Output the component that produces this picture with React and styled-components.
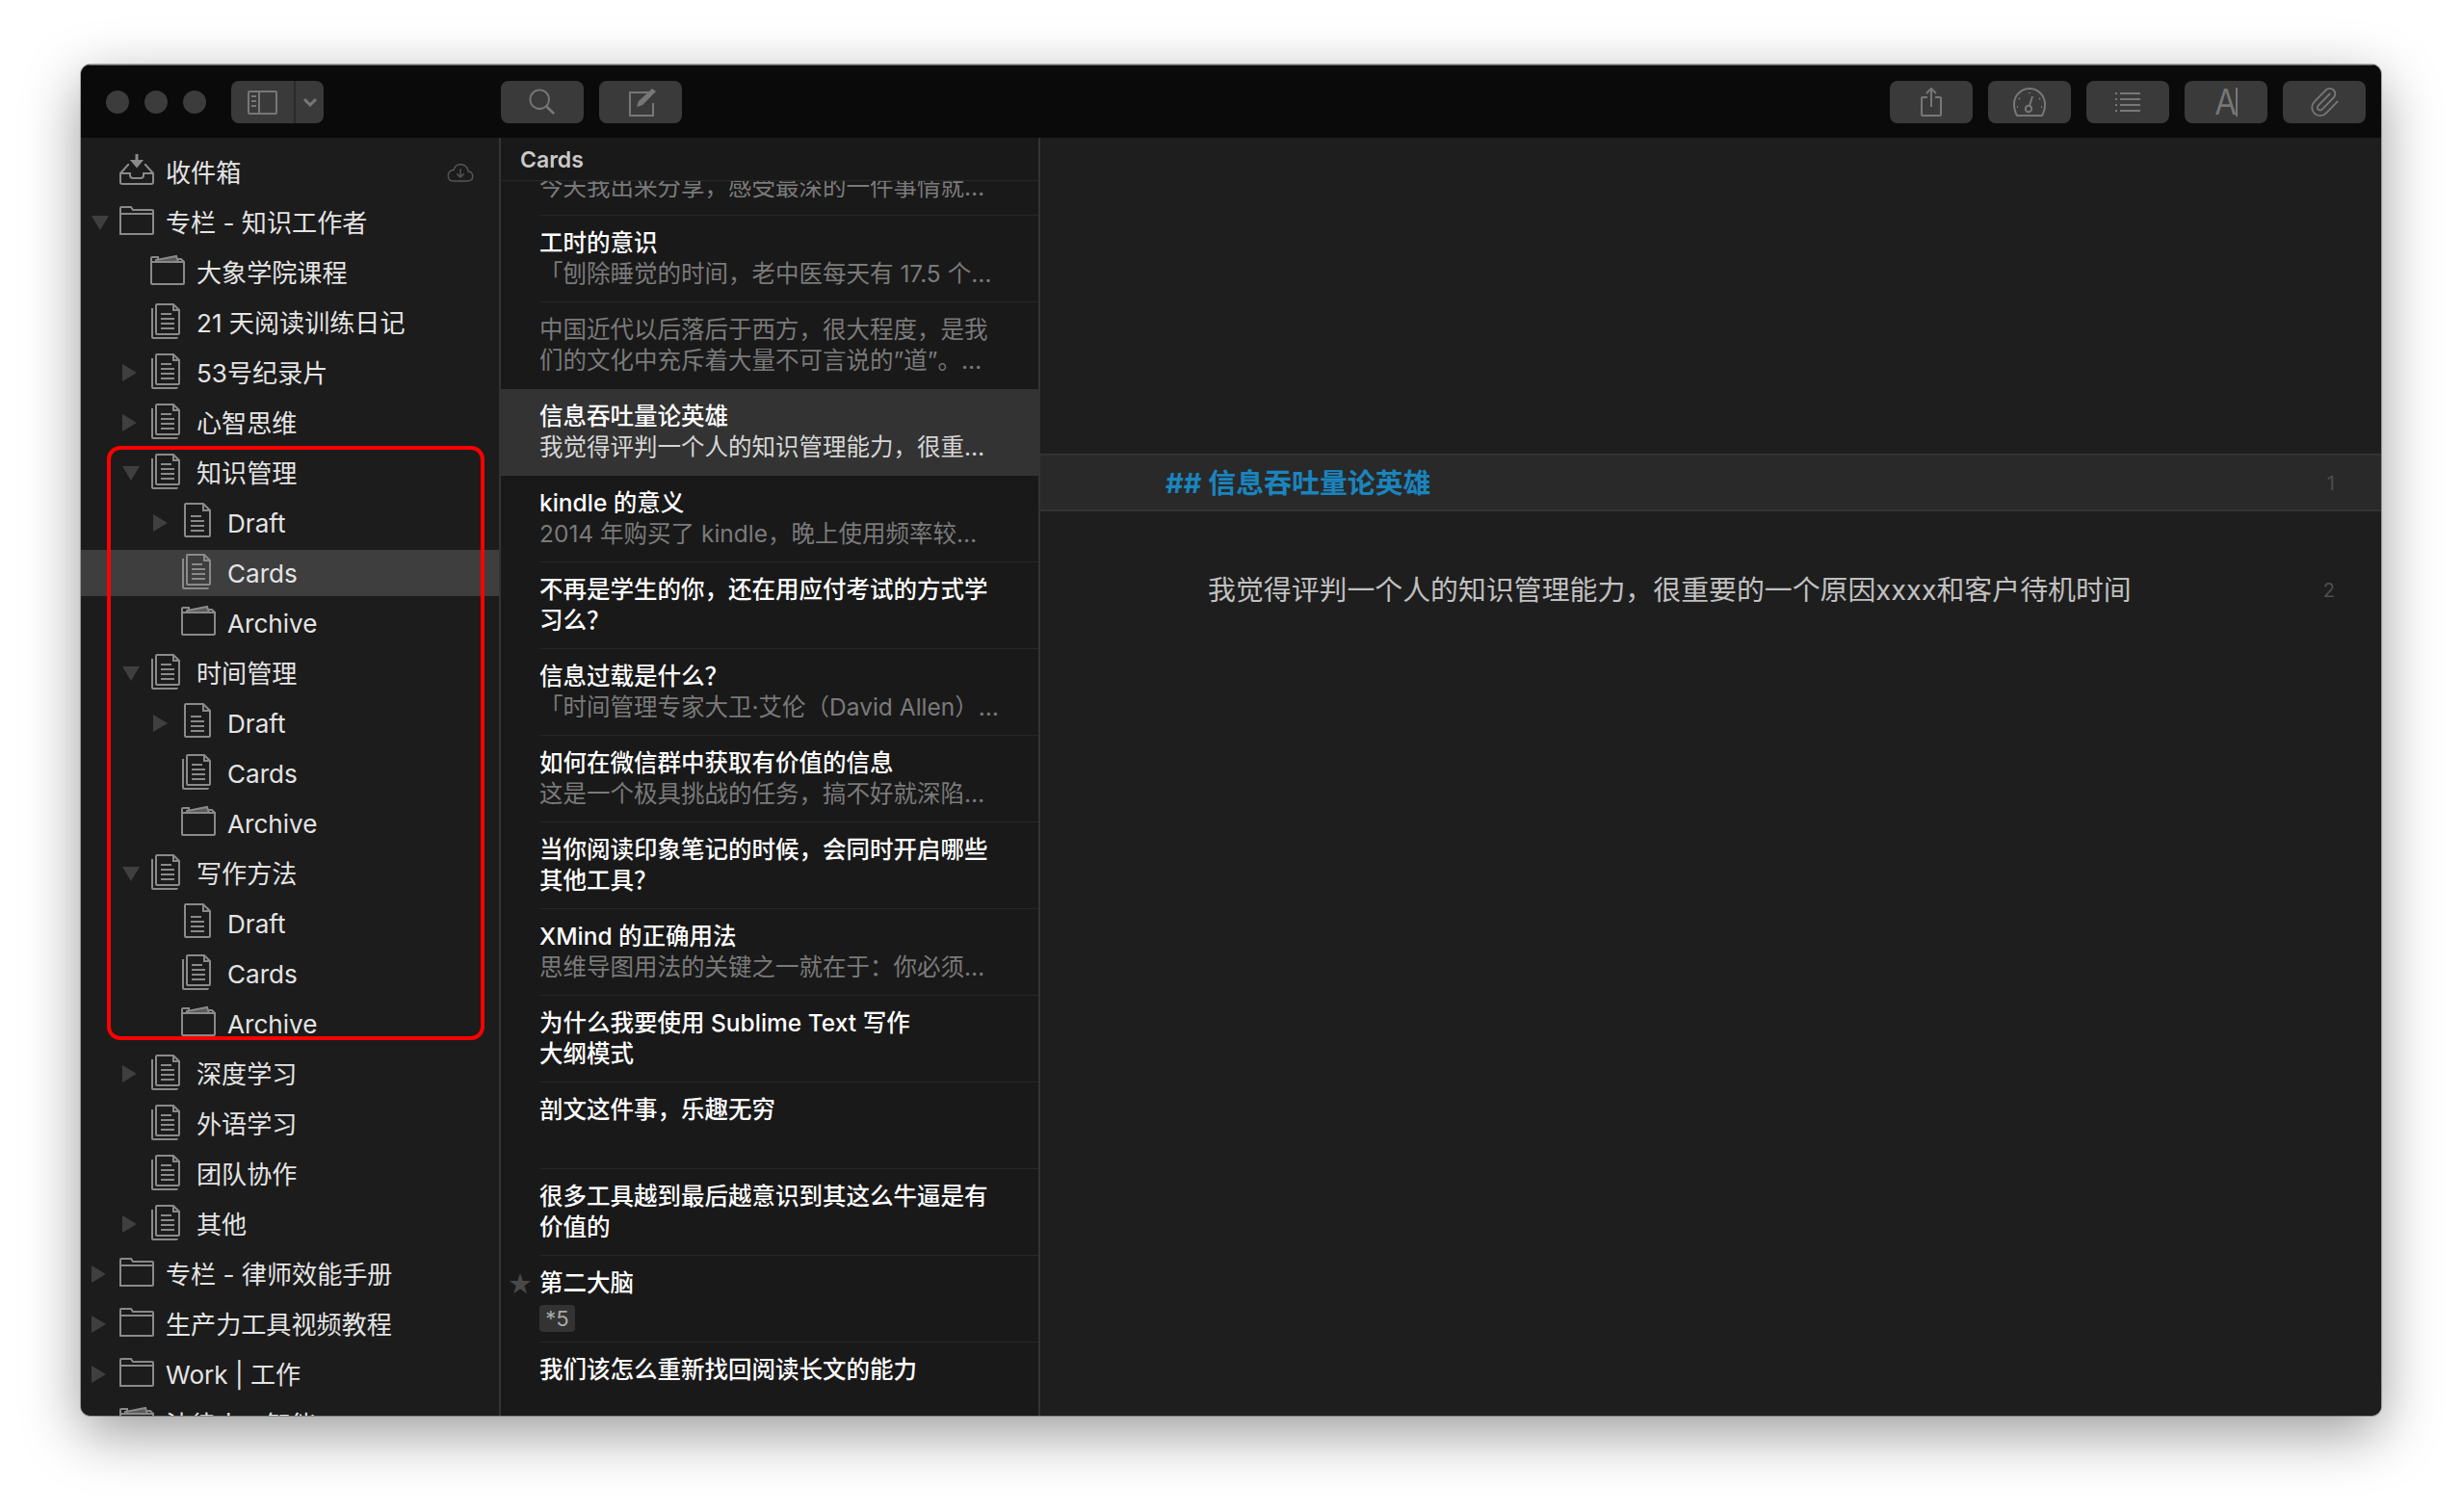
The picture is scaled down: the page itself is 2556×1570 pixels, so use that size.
import styled, { createGlobalStyle } from "styled-components";
import { Paperclip } from "lucide-react";

const sansStack = `Inter, "Noto Sans CJK SC", sans-serif`;

const GlobalStyle = createGlobalStyle`
  html {
    overflow: hidden;
    background: #fff;
  }
  body {
    margin: 0;
    padding: 0;
    height: 1570px;
    background: #fff;
    font-family: ${sansStack};
  }
`;

const sideItems = [
  { level: 0, icon: "inbox", label: "收件箱", cloud: true },
  { level: 0, icon: "folder", arrow: "down", label: "专栏 - 知识工作者" },
  { level: 1, icon: "archive", label: "大象学院课程" },
  { level: 1, icon: "stack", label: "21 天阅读训练日记" },
  { level: 1, icon: "stack", arrow: "right", label: "53号纪录片" },
  { level: 1, icon: "stack", arrow: "right", label: "心智思维" },
  { level: 1, icon: "stack", arrow: "down", label: "知识管理" },
  { level: 2, icon: "doc", arrow: "right", label: "Draft" },
  { level: 2, icon: "stack", label: "Cards", selected: true },
  { level: 2, icon: "archive", label: "Archive" },
  { level: 1, icon: "stack", arrow: "down", label: "时间管理" },
  { level: 2, icon: "doc", arrow: "right", label: "Draft" },
  { level: 2, icon: "stack", label: "Cards" },
  { level: 2, icon: "archive", label: "Archive" },
  { level: 1, icon: "stack", arrow: "down", label: "写作方法" },
  { level: 2, icon: "doc", label: "Draft" },
  { level: 2, icon: "stack", label: "Cards" },
  { level: 2, icon: "archive", label: "Archive" },
  { level: 1, icon: "stack", arrow: "right", label: "深度学习" },
  { level: 1, icon: "stack", label: "外语学习" },
  { level: 1, icon: "stack", label: "团队协作" },
  { level: 1, icon: "stack", arrow: "right", label: "其他" },
  { level: 0, icon: "folder", arrow: "right", label: "专栏 - 律师效能手册" },
  { level: 0, icon: "folder", arrow: "right", label: "生产力工具视频教程" },
  { level: 0, icon: "folder", arrow: "right", label: "Work | 工作" },
  { level: 0, icon: "archive", label: "法律人工智能" },
];

const notes = [
  { title: ["\u00a0"], sub: ["今天我出来分享，感受最深的一件事情就…"] },
  { title: ["工时的意识"], sub: ["「刨除睡觉的时间，老中医每天有 17.5 个…"] },
  { sub: ["中国近代以后落后于西方，很大程度，是我", "们的文化中充斥着大量不可言说的”道”。…"], noLine: true },
  { title: ["信息吞吐量论英雄"], sub: ["我觉得评判一个人的知识管理能力，很重…"], selected: true },
  { title: ["kindle 的意义"], sub: ["2014 年购买了 kindle，晚上使用频率较…"] },
  { title: ["不再是学生的你，还在用应付考试的方式学", "习么？"] },
  { title: ["信息过载是什么？"], sub: ["「时间管理专家大卫·艾伦（David Allen）…"] },
  { title: ["如何在微信群中获取有价值的信息"], sub: ["这是一个极具挑战的任务，搞不好就深陷…"] },
  { title: ["当你阅读印象笔记的时候，会同时开启哪些", "其他工具？"] },
  { title: ["XMind 的正确用法"], sub: ["思维导图用法的关键之一就在于：你必须…"] },
  { title: ["为什么我要使用 Sublime Text 写作", "大纲模式"] },
  { title: ["剖文这件事，乐趣无穷"] },
  { title: ["很多工具越到最后越意识到其这么牛逼是有", "价值的"] },
  { title: ["第二大脑"], tag: "*5", star: true },
  { title: ["我们该怎么重新找回阅读长文的能力"] },
];

const InboxIcon = () => (
  <IconSvg viewBox="0 0 40 40">
    <path d="M12 14 H11 L3 23 V32 Q3 34 5 34 H35 Q37 34 37 32 V23 L29 14 H28" />
    <path d="M3 23 H13 V25 Q13 28 16 28 H24 Q27 28 27 25 V23 H37" />
    <path d="M20 3 V11" strokeWidth="3" />
    <path d="M15 10 H25 L20 16 Z" fill="#8a8a8a" />
  </IconSvg>
);

const FolderIcon = () => (
  <IconSvg viewBox="0 0 40 40">
    <path d="M3 34 V7 Q3 6 4 6 H14 L16 9 H36 Q37 9 37 10 V33 Q37 34 36 34 Z" />
    <path d="M3 13 H37" />
  </IconSvg>
);

const ArchiveIcon = () => (
  <IconSvg viewBox="0 0 40 40">
    <path d="M3 11 V33 Q3 34 4 34 H36 Q37 34 37 33 V11 Z" />
    <path d="M3 11 V7 Q3 6 4 6 H10 V9 M31 8 H34 L37 11" />
    <path d="M8 11 V9 L29 5 L31 11 Z" fill="#5a5a5a" />
  </IconSvg>
);

const DocLines = ({ x, y }) => (
  <path d={`M${x} ${y} H${x + 11} M${x} ${y + 5} H${x + 14} M${x} ${y + 10} H${x + 14} M${x} ${y + 15} H${x + 14}`} />
);

const DocIcon = () => (
  <IconSvg viewBox="0 0 40 40">
    <path d="M6 35 V3 Q6 2 7 2 H25 L32 9 V35 Q32 36 31 36 H7 Q6 36 6 35 Z" />
    <path d="M25 2 V9 H32" />
    <DocLines x={12} y={15} />
  </IconSvg>
);

const StackIcon = () => (
  <IconSvg viewBox="0 0 40 40">
    <path d="M8 33 V4 Q8 3 9 3 H26 L32 9 V33 Q32 34 31 34 H9 Q8 34 8 33 Z" />
    <path d="M26 3 V9 H32" />
    <path d="M4 7 V37 Q4 38 5 38 H29 Q30 38 30 37" />
    <DocLines x={13} y={13} />
  </IconSvg>
);

const sideIcons = {
  inbox: InboxIcon,
  folder: FolderIcon,
  archive: ArchiveIcon,
  doc: DocIcon,
  stack: StackIcon,
};

const CloudIcon = () => (
  <CloudSvg viewBox="0 0 30 22">
    <path d="M8 21 H23 Q29 21 29 15.5 Q29 10.5 24 10 Q23 3 16 2 Q9 1.5 7.5 8 Q1 9 1 15 Q1 21 8 21 Z" />
    <path d="M15 7 V16 M11 12.5 L15 16.5 L19 12.5" />
  </CloudSvg>
);

const SidebarToggleIcon = () => (
  <ToolSvg viewBox="0 0 32 26" width="32" height="26">
    <rect x="1" y="2" width="29" height="23" rx="1" />
    <path d="M12 2 V25" />
    <path d="M4 7 H9 M4 12 H9 M4 17 H9" strokeWidth="2" />
  </ToolSvg>
);

const ChevronIcon = () => (
  <ToolSvg viewBox="0 0 16 10" width="16" height="10">
    <path d="M2 2 L8 8 L14 2" strokeWidth="3" />
  </ToolSvg>
);

const SearchIcon = () => (
  <ToolSvg viewBox="0 0 30 30" width="28" height="28">
    <circle cx="12" cy="12" r="10.5" />
    <path d="M20 20 L28 28" strokeWidth="3" />
  </ToolSvg>
);

const ComposeIcon = () => (
  <ComposeSvg viewBox="0 0 30 30" width="30" height="30">
    <path d="M20 5 H1 V29 H25 V16" />
    <path d="M8 20 L10 14 L24 1 L28 4 L14 18 Z" fill="#777" stroke="none" />
  </ComposeSvg>
);

const ShareIcon = () => (
  <ToolSvg viewBox="0 0 24 32" width="24" height="32">
    <path d="M8 11 H3 Q2 11 2 12 V29 Q2 30 3 30 H21 Q22 30 22 29 V12 Q22 11 21 11 H16" />
    <path d="M12 2 V21 M7 7 L12 2 L17 7" />
  </ToolSvg>
);

const GaugeIcon = () => (
  <ToolSvg viewBox="0 0 36 32" width="36" height="32">
    <path d="M5 30 Q2 25 2 18 A16 16 0 0 1 34 18 Q34 25 31 30 Z" />
    <circle cx="17" cy="23" r="3.2" />
    <path d="M18 20 L21 10" />
    <path d="M18 6 V7 M7 12 L8 13 M29 12 L28 13 M5 21 H6 M30 21 H31" />
  </ToolSvg>
);

const ListIcon = () => (
  <ToolSvg viewBox="0 0 28 22" width="28" height="22">
    <path d="M6 2 H27 M6 8 H27 M6 14 H27 M6 20 H27" strokeWidth="2" />
    <path d="M1 2 H3 M1 8 H3 M1 14 H3 M1 20 H3" strokeWidth="2" />
  </ToolSvg>
);

const FontIcon = () => (
  <FontGlyph>
    <FontLetter>A</FontLetter>
    <FontCaret />
  </FontGlyph>
);

const TreeRow = ({ item }) => {
  const Icon = sideIcons[item.icon];
  return (
    <Row $level={item.level} $selected={item.selected}>
      <ArrowSlot>{item.arrow && <Arrow $dir={item.arrow} />}</ArrowSlot>
      <IconSlot>
        <Icon />
      </IconSlot>
      <RowLabel>{item.label}</RowLabel>
      {item.cloud && <CloudIcon />}
    </Row>
  );
};

const NoteRow = ({ note }) => (
  <Note $selected={note.selected}>
    <Gutter>{note.star && <Star>★</Star>}</Gutter>
    <NoteBody $noLine={note.noLine || note.selected}>
      {note.title &&
        note.title.map((line) => <NoteTitle key={line}>{line}</NoteTitle>)}
      {note.sub &&
        note.sub.map((line) => (
          <NoteSub key={line} $selected={note.selected}>
            {line}
          </NoteSub>
        ))}
      {note.tag && <Tag>{note.tag}</Tag>}
    </NoteBody>
  </Note>
);

export default function App() {
  return (
    <Window>
      <GlobalStyle />
      <TitleBar>
        <Lights>
          <Light />
          <Light />
          <Light />
        </Lights>
        <SplitButton>
          <SplitMain>
            <SidebarToggleIcon />
          </SplitMain>
          <SplitArrow>
            <ChevronIcon />
          </SplitArrow>
        </SplitButton>
        <CenterTools>
          <ToolButton>
            <SearchIcon />
          </ToolButton>
          <ToolButton>
            <ComposeIcon />
          </ToolButton>
        </CenterTools>
        <RightTools>
          <ToolButton>
            <ShareIcon />
          </ToolButton>
          <ToolButton>
            <GaugeIcon />
          </ToolButton>
          <ToolButton>
            <ListIcon />
          </ToolButton>
          <ToolButton>
            <FontIcon />
          </ToolButton>
          <ToolButton>
            <Paperclip size={34} color="#777" strokeWidth={1.3} />
          </ToolButton>
        </RightTools>
      </TitleBar>
      <Columns>
        <Sidebar>
          {sideItems.map((item, i) => (
            <TreeRow key={i} item={item} />
          ))}
          <RedOutline />
        </Sidebar>
        <NoteList>
          <ListHeader>Cards</ListHeader>
          <ListBody>
            {notes.map((note, i) => (
              <NoteRow key={i} note={note} />
            ))}
          </ListBody>
        </NoteList>
        <Editor>
          <HeadingLine>
            <HeadingText>## 信息吞吐量论英雄</HeadingText>
            <LineNumber>1</LineNumber>
          </HeadingLine>
          <BodyLine>
            <BodyText>
              我觉得评判一个人的知识管理能力，很重要的一个原因xxxx和客户待机时间
            </BodyText>
            <LineNumber>2</LineNumber>
          </BodyLine>
        </Editor>
      </Columns>
    </Window>
  );
}

const Window = styled.div`
  box-sizing: border-box;
  width: 2388px;
  height: 1403px;
  position: relative;
  top: 67px;
  left: 84px;
  display: flex;
  flex-direction: column;
  overflow: hidden;
  border-radius: 10px;
  background: #1c1c1c;
  box-shadow: 0 18px 60px rgba(0, 0, 0, 0.4), 0 0 0 1px rgba(0, 0, 0, 0.28);
`;

const TitleBar = styled.div`
  box-sizing: border-box;
  height: 76px;
  flex-shrink: 0;
  display: flex;
  align-items: center;
  padding: 1px 16px 0 26px;
  background: #0a0a0a;
  border-top: 1px solid #6a6a6a;
`;

const Lights = styled.div`
  display: flex;
  gap: 16px;
`;

const Light = styled.div`
  width: 24px;
  height: 24px;
  border-radius: 50%;
  background: #3c3c3c;
`;

const SplitButton = styled.div`
  margin-left: 26px;
  height: 44px;
  width: 96px;
  display: flex;
  border-radius: 8px;
  overflow: hidden;
  background: #3a3a3a;
`;

const SplitMain = styled.div`
  width: 65px;
  display: flex;
  align-items: center;
  justify-content: center;
  border-right: 2px solid #2a2a2a;
`;

const SplitArrow = styled.div`
  flex: 1;
  display: flex;
  align-items: center;
  justify-content: center;
`;

const CenterTools = styled.div`
  margin-left: 184px;
  display: flex;
  gap: 16px;
`;

const RightTools = styled.div`
  margin-left: auto;
  display: flex;
  gap: 16px;
`;

const ToolButton = styled.div`
  width: 86px;
  height: 44px;
  border-radius: 8px;
  background: #3a3a3a;
  display: flex;
  align-items: center;
  justify-content: center;
`;

const ToolSvg = styled.svg`
  display: block;
  fill: none;
  stroke: #777;
  stroke-width: 2;
`;

const ComposeSvg = styled(ToolSvg)`
  margin-left: 5px;
`;

const FontGlyph = styled.div`
  display: flex;
  align-items: center;
  font-family: "Liberation Sans", sans-serif;
  font-size: 38px;
  line-height: 44px;
  color: #777;
`;

const FontLetter = styled.span`
  display: block;
  width: 21px;
  transform: scaleX(0.84);
  transform-origin: left center;
`;

const FontCaret = styled.span`
  width: 2px;
  height: 30px;
  background: #777;
`;

const Columns = styled.div`
  flex: 1;
  min-height: 0;
  display: flex;
`;

const Sidebar = styled.div`
  box-sizing: border-box;
  position: relative;
  width: 436px;
  flex-shrink: 0;
  padding-top: 12px;
  overflow: hidden;
  background: #1c1c1c;
  border-right: 2px solid #333;
`;

const Row = styled.div`
  height: 48px;
  margin-bottom: 4px;
  display: flex;
  align-items: center;
  padding-left: ${(p) => 12 + p.$level * 32}px;
  background: ${(p) => (p.$selected ? "#3e3e3e" : "transparent")};
`;

const ArrowSlot = styled.div`
  width: 26px;
  flex-shrink: 0;
`;

const Arrow = styled.div`
  width: 0;
  height: 0;
  margin-left: -1px;
  border-style: solid;
  ${(p) =>
    p.$dir === "down"
      ? `border-width: 15px 9px 0 9px; border-color: #3f3f3f transparent transparent transparent;`
      : `border-width: 9px 0 9px 15px; border-color: transparent transparent transparent #3f3f3f;`}
`;

const IconSlot = styled.div`
  width: 40px;
  height: 40px;
  flex-shrink: 0;
  margin-top: -4px;
`;

const IconSvg = styled.svg`
  display: block;
  width: 40px;
  height: 40px;
  fill: none;
  stroke: #8a8a8a;
  stroke-width: 2;
`;

const RowLabel = styled.div`
  margin-left: 10px;
  padding-top: 2px;
  font-size: 26.1px;
  line-height: 48px;
  color: #e4e4e4;
  white-space: nowrap;
`;

const CloudSvg = styled.svg`
  width: 28px;
  height: 20px;
  margin-left: auto;
  margin-right: 26px;
  fill: none;
  stroke: #555;
  stroke-width: 1.6;
`;

const RedOutline = styled.div`
  position: absolute;
  left: 27px;
  top: 320px;
  width: 392px;
  height: 617px;
  box-sizing: border-box;
  border: 4px solid #f00;
  border-radius: 14px;
  pointer-events: none;
`;

const NoteList = styled.div`
  box-sizing: border-box;
  width: 560px;
  flex-shrink: 0;
  display: flex;
  flex-direction: column;
  background: #191919;
  border-right: 2px solid #333;
`;

const ListHeader = styled.div`
  box-sizing: border-box;
  height: 45px;
  flex-shrink: 0;
  padding-left: 20px;
  font-size: 23px;
  font-weight: 600;
  line-height: 46px;
  color: #c9c9c9;
  border-bottom: 1px solid #272727;
  white-space: nowrap;
  overflow: visible;
`;

const ListBody = styled.div`
  flex: 1;
  min-height: 0;
  overflow: hidden;
  & > div:first-child {
    margin-top: -54px;
  }
`;

const Note = styled.div`
  height: 90px;
  display: flex;
  background: ${(p) => (p.$selected ? "#333" : "transparent")};
`;

const Gutter = styled.div`
  width: 40px;
  flex-shrink: 0;
  text-align: center;
`;

const Star = styled.span`
  font-size: 29px;
  line-height: 58px;
  color: #484848;
  font-family: "DejaVu Sans", sans-serif;
`;

const NoteBody = styled.div`
  box-sizing: border-box;
  flex: 1;
  padding-top: 12px;
  border-bottom: 1px solid ${(p) => (p.$noLine ? "transparent" : "#272727")};
`;

const NoteTitle = styled.div`
  font-size: 24.5px;
  font-weight: 500;
  line-height: 32px;
  color: #fff;
  white-space: nowrap;
`;

const NoteSub = styled.div`
  font-size: 24.5px;
  line-height: 32px;
  color: ${(p) => (p.$selected ? "#d6d6d6" : "#7a7a7a")};
  white-space: nowrap;
`;

const Tag = styled.div`
  width: 37px;
  height: 28px;
  margin-top: 7px;
  border-radius: 4px;
  background: #333;
  color: #aaa;
  font-size: 22px;
  line-height: 28px;
  text-align: center;
`;

const Editor = styled.div`
  flex: 1;
  padding-top: 328px;
  background: #1e1e1e;
`;

const HeadingLine = styled.div`
  box-sizing: border-box;
  height: 60px;
  display: flex;
  align-items: center;
  justify-content: space-between;
  padding: 2px 48px 0 130px;
  background: #292929;
  border-top: 2px solid #333;
  border-bottom: 2px solid #333;
`;

const HeadingText = styled.div`
  font-size: 28.9px;
  font-weight: 700;
  line-height: 52px;
  color: #1a84bd;
`;

const BodyLine = styled.div`
  margin-top: 62px;
  display: flex;
  align-items: center;
  justify-content: space-between;
  padding: 0 48px 0 174px;
  line-height: 40px;
`;

const BodyText = styled.div`
  font-size: 28.9px;
  color: #c0c0c0;
`;

const LineNumber = styled.div`
  font-size: 20px;
  color: #4e4e4e;
`;
